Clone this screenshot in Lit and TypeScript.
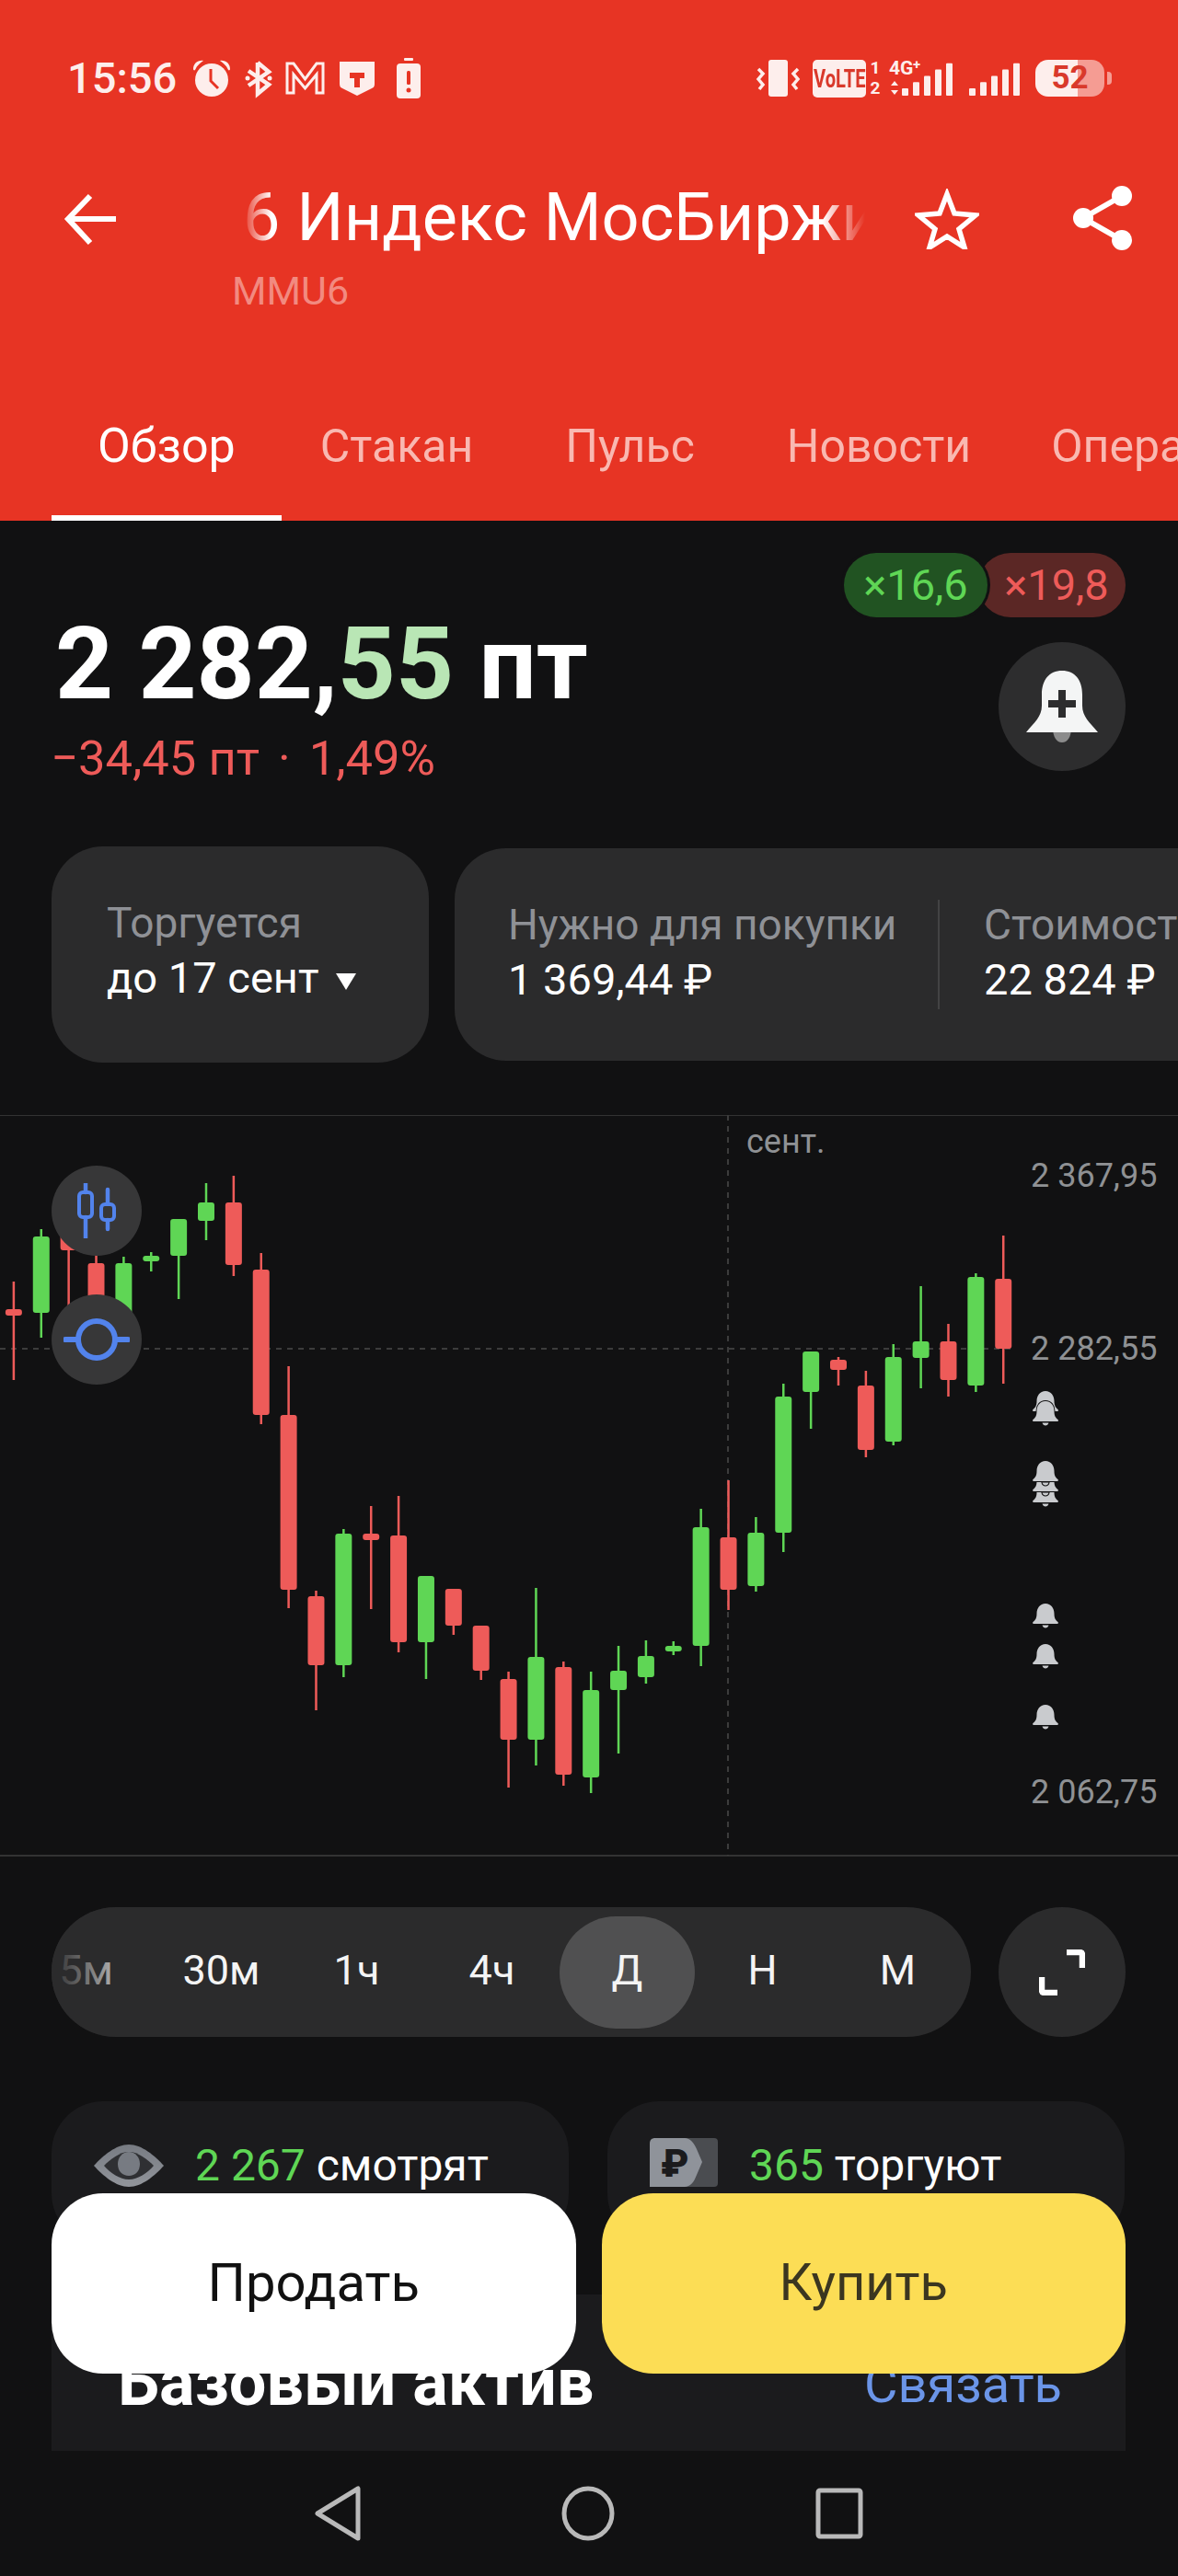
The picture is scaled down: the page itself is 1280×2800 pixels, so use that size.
import { LitElement, css, html, svg } from 'lit';
import { customElement } from 'lit/decorators.js';

type Candle = [number, number, number, number, number];

const RED = '#ee5b59';
const GREEN = '#5fd655';

// sign (1 green, 0 red), wick top, body top, body bottom, wick bottom
const CANDLES: Candle[] = [
  [0, 1393, 1423, 1430, 1500], [1, 1336, 1344, 1427, 1454], [0, 1320, 1335, 1359, 1440],
  [0, 1350, 1373, 1440, 1460], [1, 1366, 1373, 1440, 1445], [1, 1361, 1365, 1371, 1382],
  [1, 1325, 1325, 1365, 1412], [1, 1286, 1307, 1327, 1348], [0, 1278, 1307, 1375, 1387],
  [0, 1362, 1380, 1538, 1548], [0, 1485, 1538, 1728, 1748], [0, 1729, 1735, 1810, 1859],
  [1, 1662, 1667, 1810, 1823], [0, 1637, 1667, 1674, 1749], [0, 1626, 1669, 1785, 1796],
  [1, 1713, 1713, 1785, 1825], [0, 1727, 1727, 1767, 1777], [0, 1767, 1767, 1816, 1826],
  [0, 1817, 1825, 1891, 1943], [1, 1726, 1801, 1891, 1919], [0, 1806, 1812, 1929, 1941],
  [1, 1817, 1837, 1932, 1949], [1, 1789, 1816, 1837, 1906], [1, 1783, 1800, 1823, 1830],
  [1, 1784, 1789, 1795, 1799], [1, 1640, 1660, 1789, 1811], [0, 1609, 1671, 1728, 1750],
  [1, 1649, 1666, 1724, 1730], [1, 1504, 1518, 1666, 1687], [1, 1469, 1469, 1513, 1553],
  [0, 1475, 1478, 1489, 1506], [0, 1490, 1506, 1576, 1584], [1, 1461, 1475, 1567, 1571],
  [1, 1398, 1458, 1476, 1509], [0, 1439, 1458, 1500, 1518], [1, 1384, 1388, 1506, 1513],
  [0, 1343, 1390, 1466, 1504],
];

// bottom edge of each alert bell on the price axis, painted in this order
const BELLS = [1538, 1549, 1637, 1625, 1614, 1769, 1813, 1879];

const TIMEFRAMES = ['5м', '30м', '1ч', '4ч', 'Д', 'Н', 'М'];
const TABS = ['Обзор', 'Стакан', 'Пульс', 'Новости', 'Операции'];

const bell = (bottom: number) => svg`
  <path class="bell" transform="translate(1122 ${bottom - 26})"
    d="M14 0c6 0 9.500 5 9.500 11 0 5 1.500 7 4 9 .8.8.5 2-.7 2H1.200C0 22-.3 20.800.500 20c2.500-2 4-4 4-9C4.500 5 8 0 14 0zM10.500 23.500h7c-.5 2-2 3-3.500 3s-3-1-3.500-3z" />
`;

const bars = (xs: number[]) =>
  xs.map((x, i) => svg`<rect x=${x} y=${40 - (8 + i * 6.8)} width="7" height=${8 + i * 6.8} rx="1" />`);

@customElement('app-root')
export class AppRoot extends LitElement {
  static styles = css`
    :host {
      background: #111112;
      color: #fff;
      display: block;
      font-family: Roboto, 'Liberation Sans', sans-serif;
      height: 2800px;
      overflow: hidden;
      position: relative;
      width: 1280px;
    }

    .top {
      background: #e73424;
      display: flex;
      flex-direction: column;
      height: 566px;
    }

    .status {
      align-items: center;
      box-sizing: border-box;
      color: #fdeeec;
      display: flex;
      flex: none;
      height: 173px;
      justify-content: space-between;
      padding: 0 72px 3px 73px;
    }

    .status-left,
    .status-right {
      align-items: center;
      display: flex;
    }

    .time {
      font-size: 47px;
      font-weight: 500;
      line-height: 50px;
      margin-right: 17px;
    }

    .status svg {
      display: block;
      fill: currentColor;
      flex: none;
      overflow: visible;
    }

    .volte {
      align-items: center;
      background: #fdeeec;
      border-radius: 5px;
      color: #d9392b;
      display: flex;
      font-size: 28px;
      font-weight: 700;
      height: 41px;
      justify-content: center;
      margin: 0 4px 0 13px;
      width: 58px;
    }

    .volte span {
      flex: none;
      transform: scaleX(0.72);
    }

    .sims {
      font-size: 19px;
      font-weight: 700;
      line-height: 22px;
      text-align: center;
      width: 12px;
    }

    .gap-9 {
      margin-left: 9px;
    }

    .gap-17 {
      margin-left: 17px;
    }

    .battery {
      background: linear-gradient(90deg, #fdeeec 61%, #f59c93 61%);
      border-radius: 14px;
      color: #d9392b;
      font-size: 35px;
      font-weight: 700;
      height: 40px;
      line-height: 40px;
      margin-left: 16px;
      text-align: center;
      width: 75px;
    }

    .tip {
      background: #f59c93;
      border-radius: 0 4px 4px 0;
      height: 14px;
      margin-left: 3px;
      width: 5px;
    }

    .nav {
      box-sizing: border-box;
      display: flex;
      flex: none;
      height: 231px;
      padding: 24px 0 0 68px;
    }

    .nav svg {
      display: block;
      flex: none;
    }

    .back {
      margin-right: 127px;
      margin-top: 11px;
    }

    .heading {
      flex: none;
      width: 685px;
    }

    .title {
      font-size: 72px;
      line-height: 80px;
      -webkit-mask-image: linear-gradient(90deg, transparent 8px, #000 40px, #000 calc(100% - 46px), transparent);
      mask-image: linear-gradient(90deg, transparent 8px, #000 40px, #000 calc(100% - 46px), transparent);
      overflow: hidden;
      padding-left: 9px;
      white-space: nowrap;
    }

    .ticker {
      color: #f28a80;
      font-size: 43px;
      line-height: 60px;
      margin: 9px 0 0 -3px;
    }

    .star {
      margin: 8px 0 0 54px;
    }

    .share {
      margin: 4px 0 0 101px;
    }

    .tabs {
      display: flex;
      flex: none;
      height: 162px;
      padding-left: 56px;
    }

    .tab {
      color: #f9b8b1;
      flex: none;
      font-size: 50px;
      line-height: 162px;
      padding: 0 50px;
      position: relative;
    }

    .tab.active {
      color: #fff;
      font-size: 52px;
      margin-right: -8px;
    }

    .tab:last-child {
      margin-left: -13px;
    }

    .tab.active::after {
      background: #fff;
      bottom: 0;
      content: '';
      height: 6px;
      left: 0;
      position: absolute;
      right: 0;
    }

    .badges {
      display: flex;
      justify-content: flex-end;
      padding: 35px 57px 0 0;
    }

    .badge {
      border-radius: 35px;
      font-size: 47px;
      height: 70px;
      line-height: 70px;
      text-align: center;
    }

    .badge.up {
      background: #215322;
      box-shadow: 0 0 0 3px #111112;
      color: #5fd655;
      position: relative;
      width: 156px;
      z-index: 1;
    }

    .badge.down {
      background: #5b2725;
      color: #ee5b59;
      margin-left: -10px;
      padding-left: 10px;
      width: 150px;
    }

    .quote {
      display: flex;
      height: 249px;
      justify-content: space-between;
      padding: 0 57px 0 60px;
    }

    .price {
      font-size: 110px;
      font-weight: 700;
      line-height: 110px;
      margin-top: -4px;
      white-space: nowrap;
    }

    .price span {
      color: #b9e6b5;
    }

    .change {
      color: #ee5b59;
      font-size: 52.500px;
      line-height: 60px;
      margin: 17px 0 0 -5px;
    }

    .change span {
      word-spacing: 7px;
    }

    .alert {
      align-items: center;
      background: #2d2d2e;
      border-radius: 50%;
      display: flex;
      height: 140px;
      justify-content: center;
      margin-top: 27px;
      width: 138px;
    }

    .facts {
      align-items: center;
      display: flex;
      gap: 28px;
      height: 235px;
      overflow: hidden;
      padding-left: 56px;
    }

    .fact {
      background: #2b2b2c;
      border-radius: 56px;
      box-sizing: border-box;
      flex: none;
      font-size: 47px;
      line-height: 60px;
    }

    .fact.single {
      height: 235px;
      padding: 53px 0 0 60px;
      width: 410px;
    }

    .fact.double {
      align-items: center;
      display: flex;
      height: 231px;
      padding-left: 58px;
      width: 900px;
    }

    .fact.double .cell {
      margin-top: -5px;
    }

    .fact small {
      color: #8f9196;
      display: block;
      font-size: 46px;
      white-space: nowrap;
    }

    .caret {
      border-left: 11px solid transparent;
      border-right: 11px solid transparent;
      border-top: 18px solid #fff;
      display: inline-block;
      height: 0;
      margin-left: 18px;
      vertical-align: 3px;
      width: 0;
    }

    .cell {
      flex: none;
      width: 467px;
    }

    .rule {
      background: #434344;
      flex: none;
      height: 119px;
      margin-right: 48px;
      width: 2px;
    }

    .chart {
      height: 806px;
      margin-top: 57px;
      position: relative;
    }

    .chart > svg {
      display: block;
    }

    .chart text {
      fill: #8f9194;
      font-size: 36px;
    }

    .bell {
      fill: #c9cbce;
      paint-order: stroke;
      stroke: #111112;
      stroke-width: 2px;
    }

    .tool {
      align-items: center;
      background: #373738;
      border-radius: 50%;
      display: flex;
      height: 98px;
      justify-content: center;
      left: 56px;
      position: absolute;
      width: 98px;
    }

    .tool.candles {
      top: 55px;
    }

    .tool.level {
      top: 195px;
    }

    .ranges {
      display: flex;
      gap: 30px;
      margin-top: 55px;
      padding-left: 56px;
    }

    .range-bar {
      background: #2b2b2c;
      border-radius: 70px;
      box-sizing: border-box;
      display: flex;
      flex: none;
      height: 141px;
      overflow: hidden;
      padding: 10px 0 0 0;
      position: relative;
      width: 999px;
    }

    .range-bar::after {
      background: linear-gradient(90deg, rgba(43, 43, 44, 0.85) 20%, rgba(43, 43, 44, 0.35) 85%, transparent);
      bottom: 0;
      content: '';
      left: 0;
      position: absolute;
      top: 0;
      width: 80px;
    }

    .range {
      border-radius: 61px;
      color: #f4f4f4;
      flex: none;
      font-size: 45px;
      height: 122px;
      line-height: 118px;
      text-align: center;
      width: 147px;
    }

    .range:first-child {
      margin-left: -36px;
    }

    .range.active {
      background: #505051;
    }

    .expand {
      align-items: center;
      background: #2b2b2c;
      border-radius: 50%;
      display: flex;
      height: 141px;
      justify-content: center;
      width: 138px;
    }

    .stats {
      display: flex;
      gap: 42px;
      margin-top: 70px;
      padding-left: 56px;
    }

    .stat {
      align-items: flex-start;
      background: #1b1b1d;
      border-radius: 56px;
      box-sizing: border-box;
      display: flex;
      font-size: 48px;
      gap: 34px;
      height: 156px;
      line-height: 60px;
      padding: 40px 0 0 46px;
      width: 562px;
    }

    .stat svg {
      flex: none;
    }

    .eye {
      margin-top: 7px;
    }

    .stat b {
      color: #5fd655;
      font-weight: 400;
    }

    .base {
      align-items: flex-start;
      background: #1b1b1d;
      box-sizing: border-box;
      display: flex;
      height: 170px;
      justify-content: space-between;
      margin: 54px 57px 0 56px;
      padding: 66px 69px 0 72px;
    }

    .base h2 {
      font-size: 72px;
      font-weight: 700;
      line-height: 60px;
      margin: 0;
    }

    .base a {
      color: #6b95e8;
      font-size: 56px;
      line-height: 60px;
      margin-top: 2px;
    }

    .actions {
      bottom: 220px;
      display: flex;
      gap: 28px;
      left: 56px;
      position: absolute;
      right: 57px;
    }

    .action {
      align-items: center;
      background: #fff;
      border-radius: 56px;
      box-sizing: border-box;
      color: #111;
      display: flex;
      flex: 1;
      font-size: 58px;
      height: 196px;
      justify-content: center;
      padding-bottom: 2px;
    }

    .action.buy {
      background: #fcdd55;
      color: #3b3620;
      font-size: 56px;
    }

    .system {
      align-items: center;
      display: flex;
      gap: 218px;
      height: 136px;
      padding-left: 342px;
    }

    .system svg {
      fill: none;
      stroke: #b9b9b9;
      stroke-width: 5px;
    }
  `;

  private renderStatus() {
    return html`
      <div class="status">
        <div class="status-left">
          <span class="time">15:56</span>
          <svg width="42" height="40" viewBox="0 0 42 40">
            <path d="M1 10C1 4 6 0 12 1 9 3 5 6 3 11 2 12 1 11 1 10zM41 10C41 4 36 0 30 1c3 2 7 5 9 10 1 1 2 0 2-1z" />
            <circle cx="21" cy="22" r="18" />
            <path d="M20 10v13l8 8" fill="none" stroke="#e73424" stroke-width="3" />
          </svg>
          <svg style="margin-left:14px" width="32" height="40" viewBox="0 0 32 40">
            <path d="M15 3v34l12-10L5 12M15 3l12 10L5 28" fill="none" stroke="currentColor" stroke-width="4.500" />
            <circle cx="4" cy="20" r="2.500" /><circle cx="28" cy="20" r="2.500" />
          </svg>
          <svg style="margin-left:13px" width="43" height="36" viewBox="0 0 43 36">
            <path d="M2 34V2h7l12.500 17L34 2h7v32h-7V14l-12.500 15L9 14v20z" fill="none" stroke="currentColor" stroke-width="3" />
          </svg>
          <svg style="margin-left:16px" width="38" height="38" viewBox="0 0 38 38">
            <path d="M0 1h38v24c0 3-1 4-3 5L19 38 3 30c-2-1-3-2-3-5z" />
            <path d="M11 13h16v6h-5v10h-6V19h-5z" fill="#e73424" />
          </svg>
          <svg style="margin-left:24px" width="26" height="44" viewBox="0 0 26 44">
            <rect x="8" y="0" width="10" height="3" rx="1" />
            <rect x="0" y="6" width="26" height="38" rx="4" />
            <rect x="11" y="14" width="4" height="15" rx="1.500" fill="#e73424" />
            <circle cx="13" cy="35" r="2.500" fill="#e73424" />
          </svg>
        </div>
        <div class="status-right">
          <svg width="49" height="40" viewBox="0 0 49 40">
            <rect x="14" y="0" width="21" height="40" rx="3" />
            <path d="M3 10l5 5-5 6 5 6-4 5M46 10l-5 5 5 6-5 6 4 5" fill="none" stroke="currentColor" stroke-width="3.500" />
          </svg>
          <span class="volte"><span>VoLTE</span></span>
          <span class="sims">1<br />2</span>
          <svg class="gap-9" width="70" height="42" viewBox="0 0 70 42">
            <text x="0" y="17" font-size="21" font-weight="700" fill="currentColor">4G</text>
            <text x="26" y="11" font-size="15" font-weight="700" fill="currentColor">+</text>
            <path d="M6 24l4 5H2zM6 39l-4-5h8z" />
            ${bars([14, 26, 38, 50, 62])}
          </svg>
          <svg class="gap-17" width="56" height="42" viewBox="0 0 56 42">
            ${bars([0, 12, 24, 36, 48])}
          </svg>
          <span class="battery">52</span>
          <span class="tip"></span>
        </div>
      </div>
    `;
  }

  private renderHeader() {
    return html`
      <header class="top">
        ${this.renderStatus()}
        <div class="nav">
          <svg class="back" width="60" height="60" viewBox="0 0 60 60" fill="none" stroke="#fff" stroke-width="6">
            <path d="M58 30H6M30 5L6 30l24 26" />
          </svg>
          <div class="heading">
            <div class="title">6 Индекс МосБиржи</div>
            <div class="ticker">MMU6</div>
          </div>
          <svg class="star" width="70" height="66" viewBox="0 0 70 66" fill="none" stroke="#fff" stroke-width="5.500">
            <path d="M35 6l8 21 23 2-18 15 6 20-19-12-19 12 6-20L4 29l23-2z" />
          </svg>
          <svg class="share" width="66" height="72" viewBox="0 0 66 72">
            <path d="M54 12L12 36l42 24" fill="none" stroke="#fff" stroke-width="6" />
            <circle cx="54" cy="12" r="11" fill="#fff" />
            <circle cx="12" cy="36" r="11" fill="#fff" />
            <circle cx="54" cy="60" r="11" fill="#fff" />
          </svg>
        </div>
        <nav class="tabs">
          ${TABS.map((t, i) => html`<div class="tab ${i === 0 ? 'active' : ''}">${t}</div>`)}
        </nav>
      </header>
    `;
  }

  private renderChart() {
    return html`
      <section class="chart">
        <svg width="1280" height="806" viewBox="0 1212 1280 806">
          <rect x="0" y="1211" width="1280" height="2" fill="#333" />
          <rect x="0" y="2016" width="1280" height="2" fill="#333" />
          <path d="M791 1212V2017" stroke="#3c3c3c" stroke-width="2" stroke-dasharray="6 6" />
          <path d="M0 1466H1103" stroke="#3c3c3c" stroke-width="2" stroke-dasharray="6 6" />
          ${CANDLES.map((c, i) => {
            const x = 14.9 + 29.87 * i;
            const fill = c[0] ? GREEN : RED;
            return svg`
              <rect x=${x - 1.25} y=${c[1]} width="2.500" height=${c[4] - c[1]} fill=${fill} />
              <rect x=${x - 9} y=${c[2]} width="18" height=${c[3] - c[2]} rx="3" fill=${fill} />
            `;
          })}
          <text x="811" y="1253">сент.</text>
          <text x="1120" y="1290">2 367,95</text>
          <text x="1120" y="1478">2 282,55</text>
          <text x="1120" y="1960">2 062,75</text>
          ${BELLS.map((b) => bell(b))}
        </svg>
        <div class="tool candles">
          <svg width="44" height="60" viewBox="0 0 44 60" fill="none" stroke="#5283ec" stroke-width="4">
            <path d="M10 0v10M10 37v23M34 7v15M34 40v10" stroke-width="4.500" stroke-linecap="round" />
            <rect x="3" y="10" width="14" height="27" rx="4" />
            <rect x="27" y="23" width="14" height="17" rx="4" />
          </svg>
        </div>
        <div class="tool level">
          <svg width="72" height="48" viewBox="0 0 72 48" fill="none" stroke="#5283ec" stroke-width="6">
            <circle cx="36" cy="24" r="20" />
            <path d="M2 24H16M56 24H70" stroke-linecap="round" />
          </svg>
        </div>
      </section>
    `;
  }

  render() {
    return html`
      ${this.renderHeader()}
      <div class="badges">
        <div class="badge up">×16,6</div>
        <div class="badge down">×19,8</div>
      </div>
      <section class="quote">
        <div>
          <div class="price">2 282,<span>55</span> пт</div>
          <div class="change">−34,45 пт<span> · </span>1,49%</div>
        </div>
        <div class="alert">
          <svg width="78" height="78" viewBox="0 0 78 78">
            <path d="M29 62h20c0 10-4 16-10 16s-10-6-10-16z" fill="#8c8c8c" />
            <path d="M39 0c14 0 22 10 22 26v12c0 12 8 18 17 29H0C9 56 17 50 17 38V26C17 10 25 0 39 0z" fill="#f4f5f5" />
            <path d="M35 21h8v11h11v8H43v11h-8V40H24v-8h11z" fill="#2d2d2e" />
          </svg>
        </div>
      </section>
      <section class="facts">
        <div class="fact single">
          <small>Торгуется</small>
          до 17 сент<span class="caret"></span>
        </div>
        <div class="fact double">
          <div class="cell"><small>Нужно для покупки</small>1 369,44 ₽</div>
          <div class="rule"></div>
          <div class="cell"><small>Стоимость</small>22 824 ₽</div>
        </div>
      </section>
      ${this.renderChart()}
      <section class="ranges">
        <div class="range-bar">
          ${TIMEFRAMES.map((t) => html`<div class="range ${t === 'Д' ? 'active' : ''}">${t}</div>`)}
        </div>
        <div class="expand">
          <svg width="50" height="50" viewBox="0 0 50 50" fill="none" stroke="#fff" stroke-width="6.500" stroke-linejoin="round">
            <path d="M30 3h14c2 0 3 1 3 3v14M3 30v14c0 2 1 3 3 3h14" />
          </svg>
        </div>
      </section>
      <section class="stats">
        <div class="stat">
          <svg class="eye" width="76" height="46" viewBox="0 0 76 46">
            <defs>
              <linearGradient id="metal" x1="0" y1="0" x2="0" y2="1">
                <stop offset="0" stop-color="#777b82" />
                <stop offset="1" stop-color="#92959b" />
              </linearGradient>
            </defs>
            <path d="M38 0c14 0 28 12 38 23C66 34 52 46 38 46S10 34 0 23C10 12 24 0 38 0z" fill="url(#metal)" />
            <path d="M38 8c10 0 20 8 27 15-7 8-17 15-27 15S18 31 11 23C18 16 28 8 38 8z" fill="#2f3033" />
            <path d="M38 8c7 0 12 6 12 13 0 8-5 13-12 13s-12-5-12-13c0-7 5-13 12-13z" fill="#777b82" />
          </svg>
          <span><b>2 267</b> смотрят</span>
        </div>
        <div class="stat">
          <svg width="74" height="53" viewBox="0 0 74 53">
            <rect x="20" y="0" width="54" height="53" rx="4" fill="#4a4c50" />
            <path d="M0 6c0-4 2-6 6-6h32c6 0 10 5 13 12l6 14-6 14c-3 8-7 13-13 13H0z" fill="#8f939a" />
            <text x="12" y="42" font-size="42" font-weight="900" fill="#1b1b1d">₽</text>
          </svg>
          <span><b>365</b> торгуют</span>
        </div>
      </section>
      <section class="base">
        <h2>Базовый актив</h2>
        <a>Связать</a>
      </section>
      <div class="actions">
        <div class="action">Продать</div>
        <div class="action buy">Купить</div>
      </div>
      <footer class="system">
        <svg width="50" height="60" viewBox="0 0 50 60"><path d="M47 3v54L3 30z" stroke-linejoin="round" /></svg>
        <svg width="58" height="60" viewBox="0 0 58 60"><ellipse cx="29" cy="30" rx="26" ry="27" /></svg>
        <svg width="52" height="56" viewBox="0 0 52 56"><rect x="3" y="3" width="46" height="50" rx="2" /></svg>
      </footer>
    `;
  }
}

declare global {
  interface HTMLElementTagNameMap {
    'app-root': AppRoot;
  }
}
